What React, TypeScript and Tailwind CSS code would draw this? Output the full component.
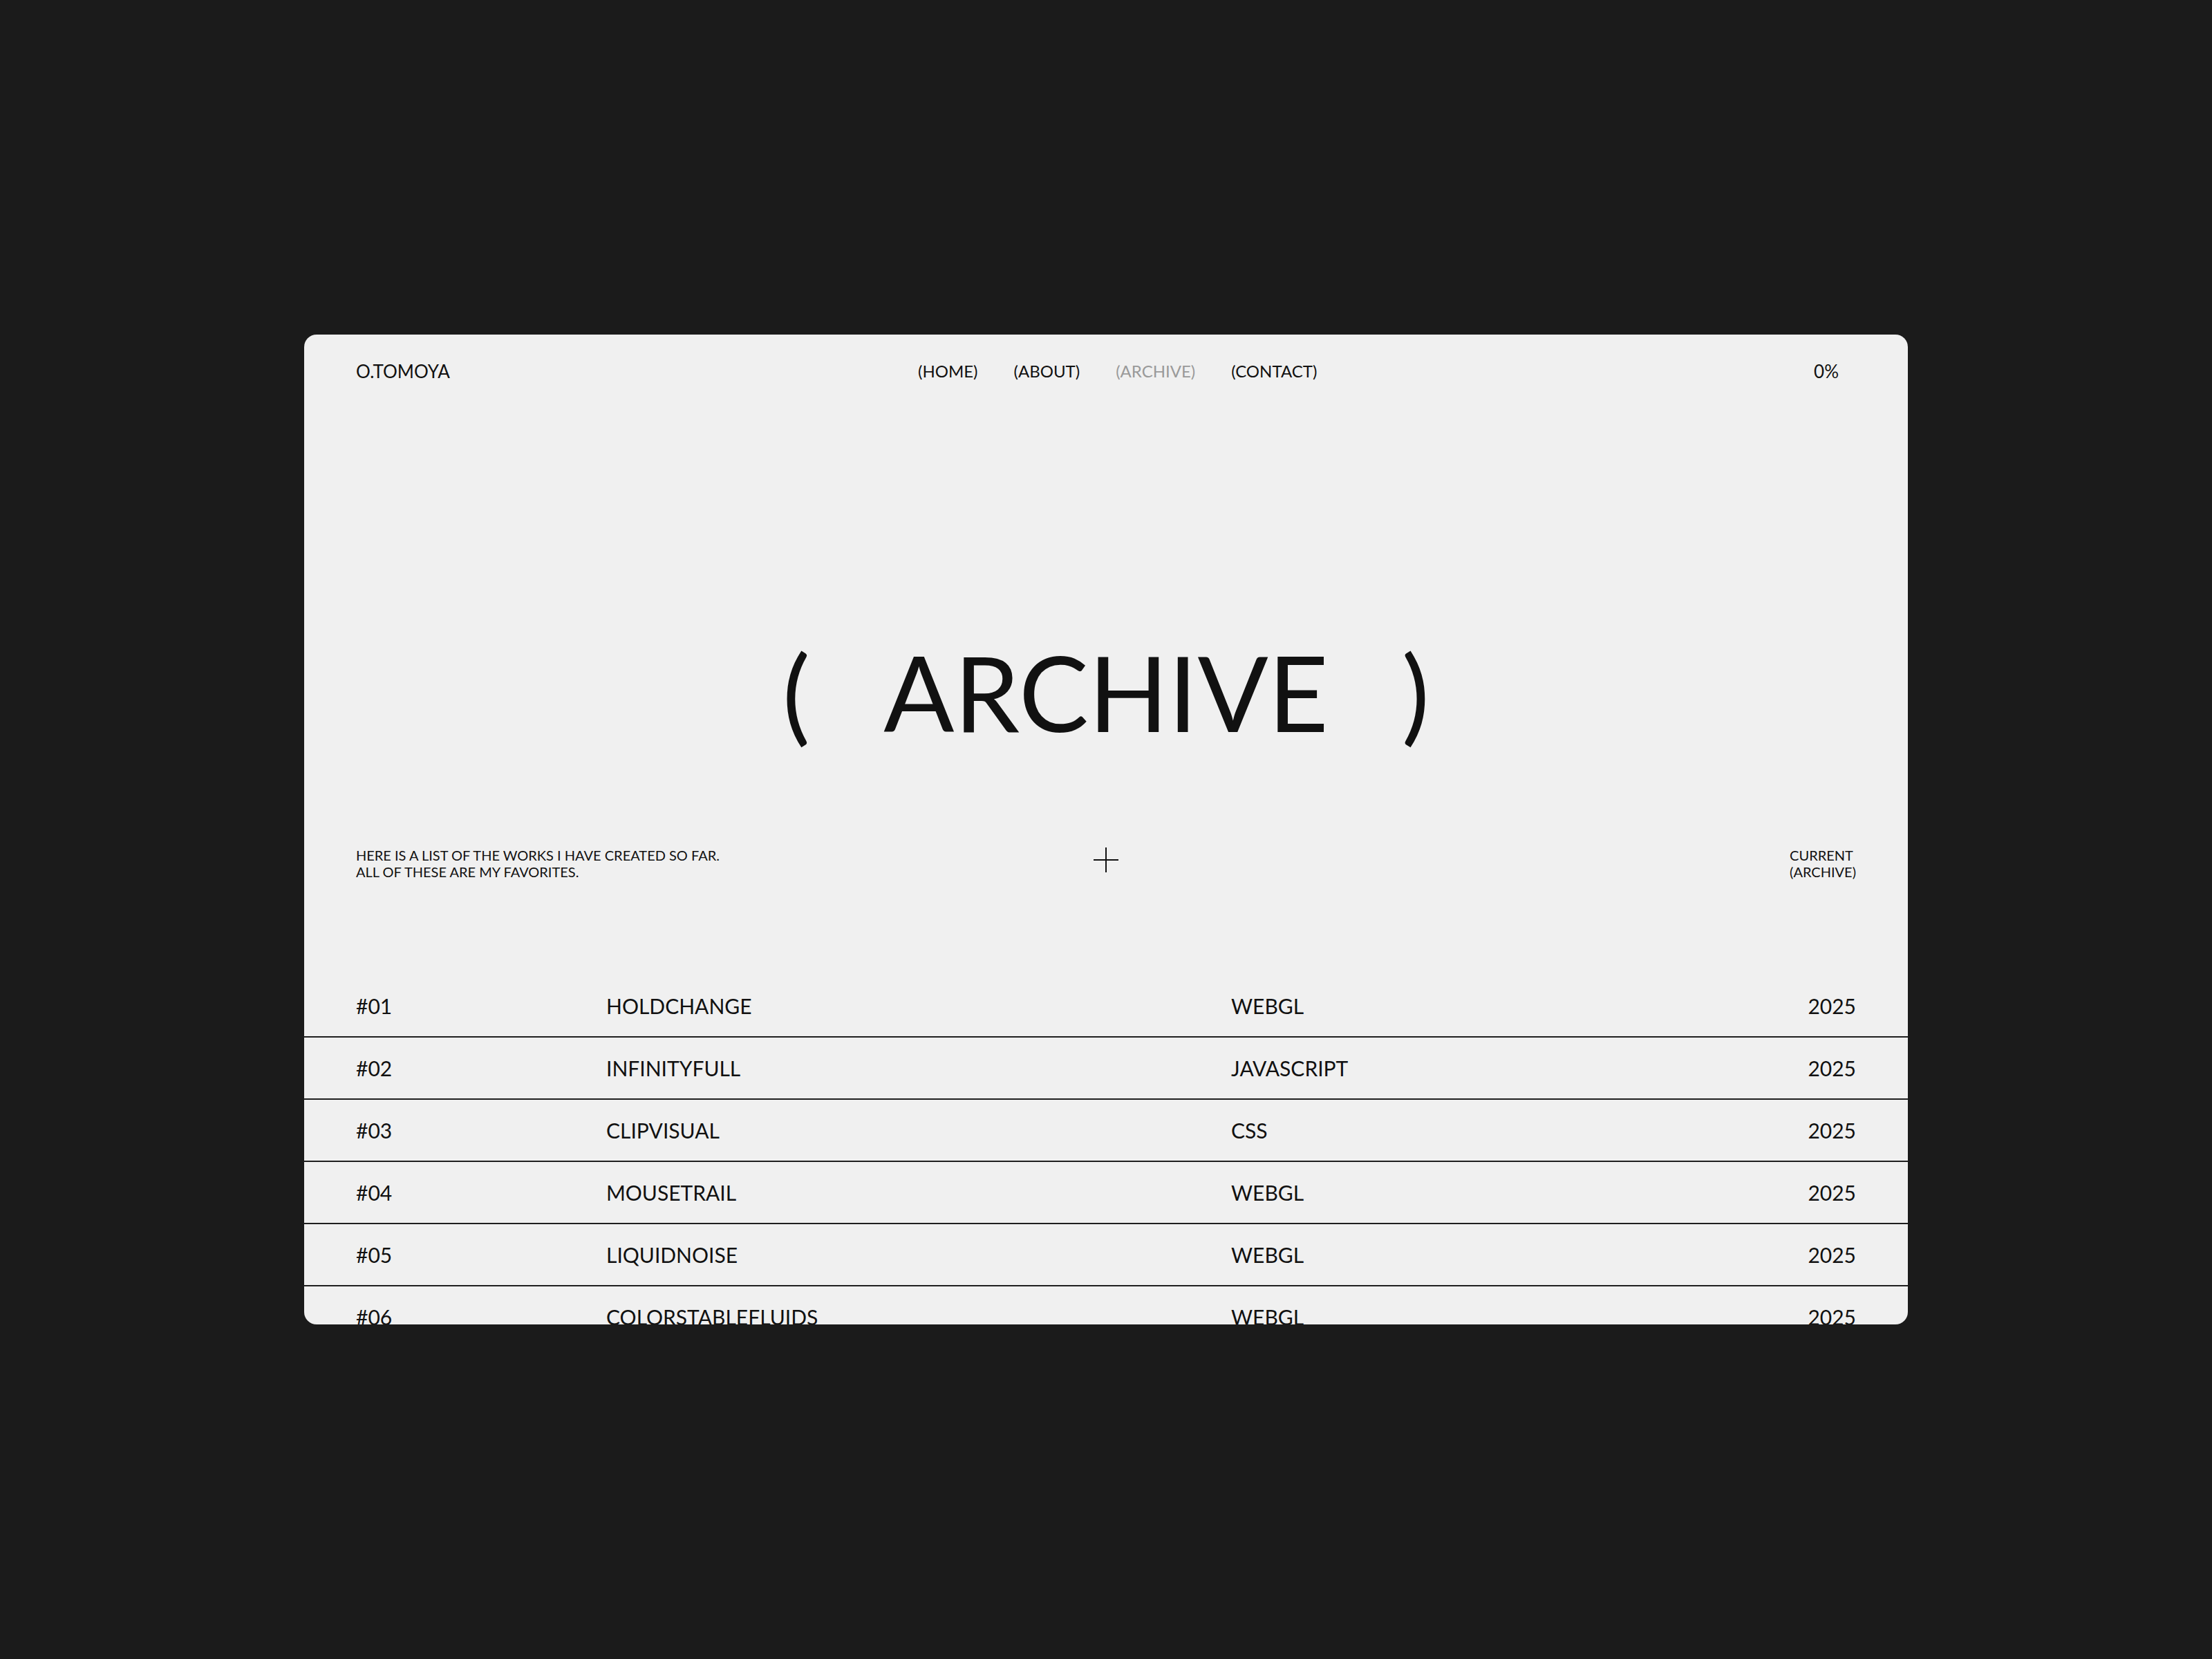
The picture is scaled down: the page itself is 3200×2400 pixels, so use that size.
import React from 'react';

// Works shown in the archive list
const works = [
  { id: '#01', title: 'HOLDCHANGE', tech: 'WEBGL', year: '2025' },
  { id: '#02', title: 'INFINITYFULL', tech: 'JAVASCRIPT', year: '2025' },
  { id: '#03', title: 'CLIPVISUAL', tech: 'CSS', year: '2025' },
  { id: '#04', title: 'MOUSETRAIL', tech: 'WEBGL', year: '2025' },
  { id: '#05', title: 'LIQUIDNOISE', tech: 'WEBGL', year: '2025' },
  { id: '#06', title: 'COLORSTABLEFLUIDS', tech: 'WEBGL', year: '2025' },
];

const navItems = [
  { label: '(HOME)', active: false },
  { label: '(ABOUT)', active: false },
  { label: '(ARCHIVE)', active: true },
  { label: '(CONTACT)', active: false },
];

const App: React.FC = () => {
  return (
    <div className="flex min-h-screen items-center justify-center bg-[#1b1b1b] font-['Lato',sans-serif] text-[#111]">
      <div className="h-[1432px] w-[2320px] overflow-hidden rounded-[18px] bg-[#f0f0f0]">
        {/* Header */}
        <header className="grid grid-cols-[813px_auto_1fr] items-center px-[75px] pt-[39px] leading-[28px]">
          <div className="text-[26px]">O.TOMOYA</div>
          <nav className="flex gap-[52px] text-[24px]">
            {navItems.map(item => (
              <span key={item.label} className={item.active ? 'text-[#9a9a9a]' : ''}>
                {item.label}
              </span>
            ))}
          </nav>
          <div className="pr-[25px] text-right text-[26px]">0%</div>
        </header>

        {/* Title */}
        <h1 className="mt-[374px] flex items-center justify-center gap-[106px] text-[151px] font-normal leading-[151px]">
          <span>(</span>
          <span>ARCHIVE</span>
          <span>)</span>
        </h1>

        {/* Intro */}
        <div className="mt-[149px] grid grid-cols-[1fr_auto_1fr] items-start px-[75px] text-[20px] leading-[24px]">
          <p>
            HERE IS A LIST OF THE WORKS I HAVE CREATED SO FAR.
            <br />
            ALL OF THESE ARE MY FAVORITES.
          </p>
          <svg width="36" height="36" viewBox="0 0 36 36" className="mt-[1px]">
            <path d="M18 0V36M0 18H36" stroke="#111" strokeWidth="2" fill="none" />
          </svg>
          <div className="flex justify-end">
            <p>
              CURRENT
              <br />
              (ARCHIVE)
            </p>
          </div>
        </div>

        {/* List */}
        <ul className="mt-[138px]">
          {works.map(work => (
            <li
              key={work.id}
              className="grid h-[90px] grid-cols-[362px_904px_1fr_auto] items-center border-b-2 border-[#1f1f1f] px-[75px] text-[30px]"
            >
              <span>{work.id}</span>
              <span>{work.title}</span>
              <span>{work.tech}</span>
              <span>{work.year}</span>
            </li>
          ))}
        </ul>
      </div>
    </div>
  );
};

export default App;
